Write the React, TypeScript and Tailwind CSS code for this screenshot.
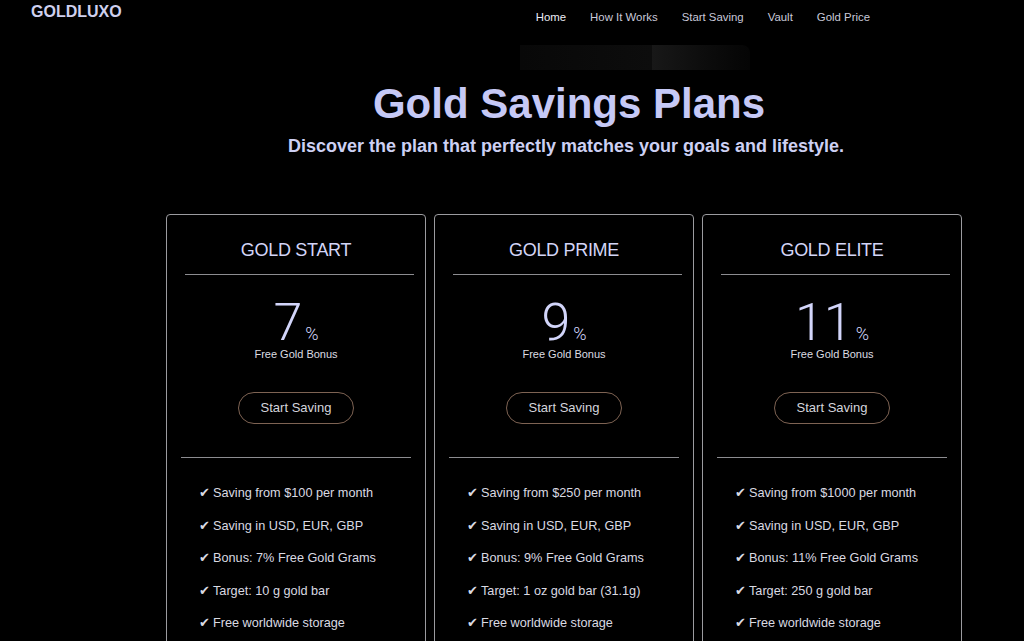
import React from "react";

interface Plan {
  name: string;
  rate: string;
  features: string[];
}

const plans: Plan[] = [
  {
    name: "GOLD START",
    rate: "7",
    features: [
      "Saving from $100 per month",
      "Saving in USD, EUR, GBP",
      "Bonus: 7% Free Gold Grams",
      "Target: 10 g gold bar",
      "Free worldwide storage",
    ],
  },
  {
    name: "GOLD PRIME",
    rate: "9",
    features: [
      "Saving from $250 per month",
      "Saving in USD, EUR, GBP",
      "Bonus: 9% Free Gold Grams",
      "Target: 1 oz gold bar (31.1g)",
      "Free worldwide storage",
    ],
  },
  {
    name: "GOLD ELITE",
    rate: "11",
    features: [
      "Saving from $1000 per month",
      "Saving in USD, EUR, GBP",
      "Bonus: 11% Free Gold Grams",
      "Target: 250 g gold bar",
      "Free worldwide storage",
    ],
  },
];

const navLinks = ["Home", "How It Works", "Start Saving", "Vault", "Gold Price"];

const PlanCard: React.FC<{ plan: Plan }> = ({ plan }) => {
  return (
    <div className="w-[260px] h-[460px] shrink-0 border border-[#9b9b9f] rounded-[4px] bg-black">
      <h2 className="pt-[23px] text-center text-[18px] leading-[24px] text-[#d3d5f7] tracking-[-0.3px]">
        {plan.name}
      </h2>
      <div className="mt-[12px] ml-[18px] mr-[11px] h-px bg-[#8c8c90]"></div>
      <div className="mt-[24px] flex items-baseline justify-center">
        <span className="text-[52px] leading-[48px] font-['Roboto','Liberation_Sans',sans-serif] font-light text-[#d2d5fa]">
          {plan.rate}
        </span>
        <span className="ml-[3px] text-[18px] leading-none font-['Roboto','Liberation_Sans',sans-serif] font-light text-[#d2d5fa]">
          %
        </span>
      </div>
      <p className="text-center text-[11px] leading-[14px] text-[#dcdce2]">
        Free Gold Bonus
      </p>
      <div className="mt-[31px] flex justify-center">
        <button className="w-[116px] h-[32px] rounded-full border-[1.5px] border-[#7e6353] text-[13px] text-[#d4d4dc]">
          Start Saving
        </button>
      </div>
      <div className="mt-[33px] mx-[14px] h-px bg-[#8c8c90]"></div>
      <ul className="mt-[19px] pl-[32px]">
        {plan.features.map((f) => (
          <li
            key={f}
            className="flex items-center text-[12.7px] leading-[32.5px] text-[#dadae2]"
          >
            <span className="w-[14px] text-[13px] font-['DejaVu_Sans',sans-serif] text-[#dadae2]">
              ✔
            </span>
            <span>{f}</span>
          </li>
        ))}
      </ul>
    </div>
  );
};

export default function App() {
  return (
    <div className="w-[1024px] h-[641px] overflow-hidden bg-black font-['Liberation_Sans',Arial,sans-serif]">
      <header className="h-[34px] flex justify-between pr-[154px]">
        <div className="pl-[31px] pt-[3px] text-[16px] leading-[18px] font-bold text-[#cfd0ee]">
          GOLDLUXO
        </div>
        <nav className="flex gap-[24px] pt-[10px]">
          {navLinks.map((l, i) => (
            <a
              key={l}
              className={
                i === 0
                  ? "text-[11.4px] leading-[14px] text-[#ececf4]"
                  : "text-[11.4px] leading-[14px] text-[#c9c9da]"
              }
            >
              {l}
            </a>
          ))}
        </nav>
      </header>

      <div className="mt-[11px] h-[25px] flex pl-[520px]">
        <div className="w-[132px] h-full bg-gradient-to-r from-[#080808] to-[#0d0d0d]"></div>
        <div className="w-[98px] h-full bg-gradient-to-r from-[#181818] to-[#050505] rounded-tr-[8px]"></div>
      </div>

      <div className="pl-[108px] flex flex-col items-center">
        <h1 className="mt-[13px] ml-[6px] text-[42px] leading-[42px] font-bold text-[#c6c9f6]">
          Gold Savings Plans
        </h1>
        <p className="mt-[9px] text-[18px] leading-[24px] font-bold text-[#cdd0f3]">
          Discover the plan that perfectly matches your goals and lifestyle.
        </p>
        <div className="mt-[56px] mr-[4px] flex gap-[8px]">
          {plans.map((p) => (
            <PlanCard key={p.name} plan={p} />
          ))}
        </div>
      </div>
    </div>
  );
}
